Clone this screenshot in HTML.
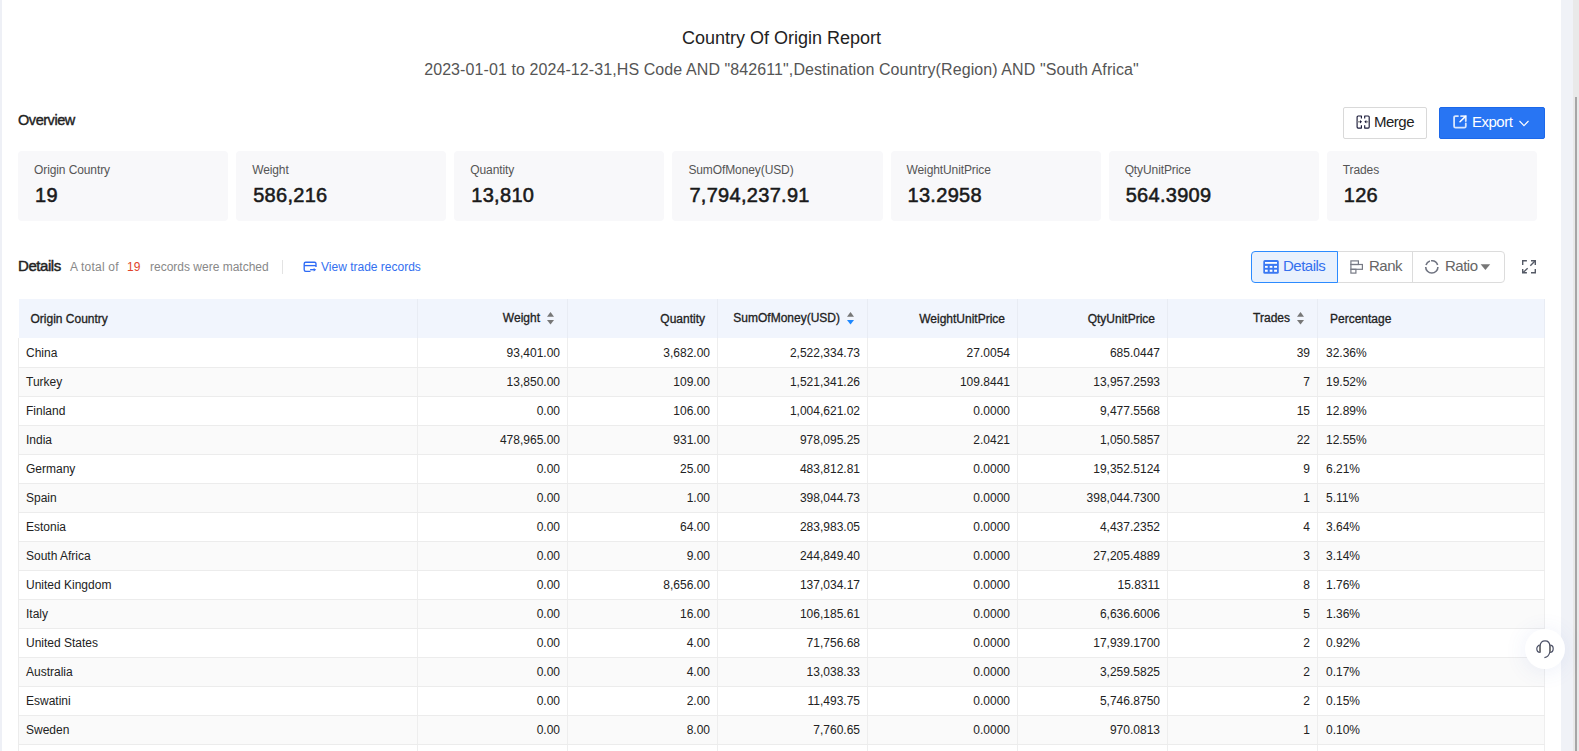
<!DOCTYPE html>
<html><head><meta charset="utf-8">
<style>
*{box-sizing:border-box;margin:0;padding:0}
html,body{width:1579px;height:751px;overflow:hidden;background:#fff;font-family:"Liberation Sans",sans-serif;color:#222}
.a{position:absolute}
.lstrip{position:absolute;left:0;top:0;width:2px;height:751px;background:#eef0f6}
.rstrip{position:absolute;left:1561px;top:0;width:12px;height:751px;background:#f0f2f7}
.track{position:absolute;left:1573px;top:0;width:6px;height:751px;background:#e9e9e9}
.thumb{position:absolute;left:1575px;top:97px;width:2px;height:654px;background:#a6a6a6}
.title{position:absolute;left:0;width:1563px;top:27px;text-align:center;font-size:18px;line-height:22px;color:#222}
.sub{position:absolute;left:0;width:1563px;top:60px;text-align:center;font-size:16px;letter-spacing:.09px;line-height:20px;color:#555}
.ov{position:absolute;left:18px;top:110.5px;font-size:14.5px;line-height:18px;letter-spacing:-0.45px;color:#222;-webkit-text-stroke:.4px #222}
.btn{position:absolute;top:107px;height:32px;border-radius:2px;font-size:15px;line-height:30px;letter-spacing:-0.5px}
.merge{left:1343px;width:84px;border:1px solid #d9d9d9;background:#fff;color:#222}
.export{left:1439px;width:106px;background:#2875f3;border:1px solid #1c68ea;color:#fff}
.cards{position:absolute;left:18px;top:151px;width:1535px;height:70px}
.card{float:left;width:210.14px;height:70px;margin-right:8px;background:#f8f8fa;border-radius:4px;padding:12px 0 0 16px}
.cl{font-size:12px;line-height:14px;color:#555;height:14px;letter-spacing:-.1px}
.cv{font-size:20px;line-height:20px;margin-top:8px;padding-left:1px;letter-spacing:.3px;color:#1a1a1a;-webkit-text-stroke:.55px #1a1a1a}
.det{position:absolute;left:18px;top:257px;font-size:15px;line-height:18px;letter-spacing:-0.45px;color:#222;-webkit-text-stroke:.45px #222}
.tot{position:absolute;top:260px;font-size:12px;line-height:14px;color:#888}
.red{color:#e0442b}
.sep{position:absolute;left:282px;top:260px;width:1px;height:14px;background:#e3e3e3}
.vtr{position:absolute;left:321px;top:260px;font-size:12px;line-height:14px;color:#3370f0}
.seg{position:absolute;top:251px;height:32px;border:1px solid #dcdcdc;font-size:15px;line-height:28px;letter-spacing:-0.5px;color:#666}
.table{position:absolute;left:18px;top:299px;width:1526px;border-collapse:collapse;table-layout:fixed}
.table th{height:39px;background:#f1f5fd;font-size:12px;font-weight:normal;color:#222;-webkit-text-stroke:.3px #222;border-right:1px solid #e8ecf4;padding:1px 12px 0 12px;white-space:nowrap}
.table th.s{padding-right:13px;padding-top:0;padding-bottom:1px}
.table td{height:29px;font-size:12px;color:#222;border-right:1px solid #eeeeee;border-bottom:1px solid #ececec;padding:1px 7px 0 8px;white-space:nowrap}
.table td.c0{border-left:1px solid #ececec;padding-left:7px}
.table th.r,.table td.r{text-align:right}
.table th.l,.table td.l,.table th.c0,.table td.c0{text-align:left}
tr.even td{background:#fafafa}
tr.odd td{background:#fff}
.sort{display:inline-block;margin-left:7px;vertical-align:-3.8px}
.cs{position:absolute;left:1525px;top:629px;width:40px;height:40px;border-radius:50%;background:#fff;box-shadow:0 2px 22px rgba(70,100,200,0.10)}
</style></head><body>
<div class="lstrip"></div>
<div class="rstrip"></div>
<div class="track"></div>
<div class="thumb"></div>

<div class="title">Country Of Origin Report</div>
<div class="sub">2023-01-01 to 2024-12-31,HS Code AND "842611",Destination Country(Region) AND "South Africa"</div>

<div class="ov">Overview</div>
<div class="btn merge"><span class="a" style="left:30px;top:-1.5px">Merge</span></div>
<svg class="a" style="left:1355px;top:114px" width="16" height="16" viewBox="0 0 16 16" fill="none" stroke="#1a1a38" stroke-width="1.15" stroke-linejoin="round"><path d="M6.4 4.6V2H3.1Q2.1 2 2.1 3V13.1Q2.1 14.1 3.1 14.1H6.4V11.2"/><path d="M9.7 4.6V2H13.2Q14.2 2 14.2 3V13.1Q14.2 14.1 13.2 14.1H9.7V11.2"/><path d="M2.6 7.8H5.2M13.7 7.8H11.1" stroke="#999" stroke-width="1.5"/><path d="M5 6.1L7 7.8L5 9.5Z M11.3 6.1L9.3 7.8L11.3 9.5Z" fill="#1a1a38" stroke="none"/></svg>
<div class="btn export"><span class="a" style="left:32px;top:-1px">Export</span></div>
<svg class="a" style="left:1451px;top:113px" width="17" height="17" viewBox="0 0 17 17" fill="none" stroke-width="1.8" stroke-linecap="round"><path d="M7 3.1H4.6Q3.1 3.1 3.1 4.6V13.2Q3.1 14.7 4.6 14.7H13.3Q14.8 14.7 14.8 13.2V10.4" stroke="rgba(255,255,255,.82)"/><path d="M10 3.1H14.8V8" stroke="rgba(255,255,255,.82)"/><path d="M9 8.8L14.5 3.4" stroke="#fff" stroke-width="1.5"/></svg>
<svg class="a" style="left:1518px;top:119px" width="12" height="9" viewBox="0 0 12 9" fill="none" stroke="#fff" stroke-width="1.1"><path d="M1.5 2L6 6.6L10.5 2"/></svg>

<div class="cards">
<div class="card"><div class="cl">Origin Country</div><div class="cv">19</div></div>
<div class="card"><div class="cl">Weight</div><div class="cv">586,216</div></div>
<div class="card"><div class="cl">Quantity</div><div class="cv">13,810</div></div>
<div class="card"><div class="cl">SumOfMoney(USD)</div><div class="cv">7,794,237.91</div></div>
<div class="card"><div class="cl">WeightUnitPrice</div><div class="cv">13.2958</div></div>
<div class="card"><div class="cl">QtyUnitPrice</div><div class="cv">564.3909</div></div>
<div class="card"><div class="cl">Trades</div><div class="cv">126</div></div>
</div>

<div class="det">Details</div>
<div class="tot" style="left:70px;letter-spacing:.2px">A total of</div>
<div class="tot red" style="left:127px">19</div>
<div class="tot" style="left:150px">records were matched</div>
<div class="sep"></div>
<svg class="a" style="left:302px;top:260px" width="16" height="16" viewBox="0 0 16 16" fill="none" stroke="#2f6bf5" stroke-width="1.35"><path d="M8.5 11.3H3.7Q2.2 11.3 2.2 9.8V3.7Q2.2 2.2 3.7 2.2H12.5Q14 2.2 14 3.7V6.9"/><path d="M2.2 5.6H14"/><path d="M8.1 9.7H12"/><path d="M11.7 7.9L14.2 9.7L11.7 11.5Z" fill="#2f6bf5" stroke="none"/></svg>
<div class="vtr">View trade records</div>

<div class="seg" style="left:1251px;width:87px;border-color:#2c8bff;background:#e9f1fd;color:#3470ee;border-radius:4px 0 0 4px;z-index:2"><span class="a" style="left:31px;top:0">Details</span></div>
<svg class="a" style="left:1262px;top:259px;z-index:3" width="18" height="18" viewBox="0 0 18 18"><rect x="1.3" y="1.1" width="15.5" height="13.7" rx="1.6" fill="#3a78f2"/><rect x="3" y="3" width="12" height="1.8" fill="#fff"/><rect x="3" y="6.9" width="2.7" height="1.9" fill="#fff"/><rect x="3" y="10.7" width="2.7" height="2.1" fill="#fff"/><rect x="7.7" y="6.9" width="2.7" height="1.9" fill="#fff"/><rect x="7.7" y="10.7" width="2.7" height="2.1" fill="#fff"/><rect x="12.1" y="6.9" width="2.9" height="1.9" fill="#fff"/><rect x="12.1" y="10.7" width="2.9" height="2.1" fill="#fff"/></svg>
<div class="seg" style="left:1337px;width:76px;border-left:none"><span class="a" style="left:32px;top:0">Rank</span></div>
<svg class="a" style="left:1349px;top:259px" width="16" height="16" viewBox="0 0 16 16" fill="none" stroke="#777a85" stroke-width="1.2"><rect x="1.9" y="1.9" width="7.5" height="3.6"/><rect x="1.9" y="5.5" width="11.5" height="4.8"/><rect x="1.9" y="10.3" width="5" height="3.8"/></svg>
<div class="seg" style="left:1412px;width:93px;border-radius:0 4px 4px 0"><span class="a" style="left:32px;top:0">Ratio</span></div>
<svg class="a" style="left:1424px;top:259px" width="16" height="16" viewBox="0 0 16 16" fill="none" stroke="#6f7380" stroke-width="1.6"><path d="M5.91 2.0A6.1 6.1 0 0 0 2.0 5.91"/><path d="M13.61 5.96A6.1 6.1 0 0 0 7.06 1.75"/><path d="M13.9 7.91A6.1 6.1 0 0 1 1.7 7.91"/></svg>
<svg class="a" style="left:1480px;top:264px" width="11" height="7" viewBox="0 0 11 7"><path d="M0.6 0.3H10.2L5.4 5.9Z" fill="#777"/></svg>
<svg class="a" style="left:1520px;top:258px" width="18" height="18" viewBox="0 0 18 18" fill="none" stroke="#555a66" stroke-width="1.4"><path d="M2.7 6.9V2.8H6.9"/><path d="M11 2.8H15.3V6.9"/><path d="M15 3.1L10.3 7.8"/><path d="M2.7 11V14.8H6.9"/><path d="M3 14.5L7.7 10.3"/><path d="M11 14.8H15.3V11"/></svg>

<table class="table">
<colgroup><col style="width:399px"><col style="width:150px"><col style="width:150px"><col style="width:150px"><col style="width:150px"><col style="width:150px"><col style="width:150px"><col style="width:227px"></colgroup>
<tr class="hd"><th class="c0">Origin Country</th><th class="r s">Weight<svg class="sort" width="7" height="13" viewBox="0 0 7 13"><path d="M0 4.7L3.5 0L7 4.7Z" fill="#777"/><path d="M0 7.9H7L3.5 12.6Z" fill="#777"/></svg></th><th class="r">Quantity</th><th class="r s">SumOfMoney(USD)<svg class="sort" width="7" height="13" viewBox="0 0 7 13"><path d="M0 4.7L3.5 0L7 4.7Z" fill="#777"/><path d="M0 7.9H7L3.5 12.6Z" fill="#1e88ff"/></svg></th><th class="r">WeightUnitPrice</th><th class="r">QtyUnitPrice</th><th class="r s">Trades<svg class="sort" width="7" height="13" viewBox="0 0 7 13"><path d="M0 4.7L3.5 0L7 4.7Z" fill="#777"/><path d="M0 7.9H7L3.5 12.6Z" fill="#777"/></svg></th><th class="l">Percentage</th></tr>
<tr class="odd"><td class="c0">China</td><td class="r">93,401.00</td><td class="r">3,682.00</td><td class="r">2,522,334.73</td><td class="r">27.0054</td><td class="r">685.0447</td><td class="r">39</td><td class="l">32.36%</td></tr>
<tr class="even"><td class="c0">Turkey</td><td class="r">13,850.00</td><td class="r">109.00</td><td class="r">1,521,341.26</td><td class="r">109.8441</td><td class="r">13,957.2593</td><td class="r">7</td><td class="l">19.52%</td></tr>
<tr class="odd"><td class="c0">Finland</td><td class="r">0.00</td><td class="r">106.00</td><td class="r">1,004,621.02</td><td class="r">0.0000</td><td class="r">9,477.5568</td><td class="r">15</td><td class="l">12.89%</td></tr>
<tr class="even"><td class="c0">India</td><td class="r">478,965.00</td><td class="r">931.00</td><td class="r">978,095.25</td><td class="r">2.0421</td><td class="r">1,050.5857</td><td class="r">22</td><td class="l">12.55%</td></tr>
<tr class="odd"><td class="c0">Germany</td><td class="r">0.00</td><td class="r">25.00</td><td class="r">483,812.81</td><td class="r">0.0000</td><td class="r">19,352.5124</td><td class="r">9</td><td class="l">6.21%</td></tr>
<tr class="even"><td class="c0">Spain</td><td class="r">0.00</td><td class="r">1.00</td><td class="r">398,044.73</td><td class="r">0.0000</td><td class="r">398,044.7300</td><td class="r">1</td><td class="l">5.11%</td></tr>
<tr class="odd"><td class="c0">Estonia</td><td class="r">0.00</td><td class="r">64.00</td><td class="r">283,983.05</td><td class="r">0.0000</td><td class="r">4,437.2352</td><td class="r">4</td><td class="l">3.64%</td></tr>
<tr class="even"><td class="c0">South Africa</td><td class="r">0.00</td><td class="r">9.00</td><td class="r">244,849.40</td><td class="r">0.0000</td><td class="r">27,205.4889</td><td class="r">3</td><td class="l">3.14%</td></tr>
<tr class="odd"><td class="c0">United Kingdom</td><td class="r">0.00</td><td class="r">8,656.00</td><td class="r">137,034.17</td><td class="r">0.0000</td><td class="r">15.8311</td><td class="r">8</td><td class="l">1.76%</td></tr>
<tr class="even"><td class="c0">Italy</td><td class="r">0.00</td><td class="r">16.00</td><td class="r">106,185.61</td><td class="r">0.0000</td><td class="r">6,636.6006</td><td class="r">5</td><td class="l">1.36%</td></tr>
<tr class="odd"><td class="c0">United States</td><td class="r">0.00</td><td class="r">4.00</td><td class="r">71,756.68</td><td class="r">0.0000</td><td class="r">17,939.1700</td><td class="r">2</td><td class="l">0.92%</td></tr>
<tr class="even"><td class="c0">Australia</td><td class="r">0.00</td><td class="r">4.00</td><td class="r">13,038.33</td><td class="r">0.0000</td><td class="r">3,259.5825</td><td class="r">2</td><td class="l">0.17%</td></tr>
<tr class="odd"><td class="c0">Eswatini</td><td class="r">0.00</td><td class="r">2.00</td><td class="r">11,493.75</td><td class="r">0.0000</td><td class="r">5,746.8750</td><td class="r">2</td><td class="l">0.15%</td></tr>
<tr class="even"><td class="c0">Sweden</td><td class="r">0.00</td><td class="r">8.00</td><td class="r">7,760.65</td><td class="r">0.0000</td><td class="r">970.0813</td><td class="r">1</td><td class="l">0.10%</td></tr>
<tr class="odd"><td class="c0"></td><td class="r"></td><td class="r"></td><td class="r"></td><td class="r"></td><td class="r"></td><td class="r"></td><td class="l"></td></tr>
</table>

<div class="cs"></div>
<svg class="a" style="left:1533px;top:637px" width="24" height="24" viewBox="0 0 24 24" fill="none" stroke="#4a4f66" stroke-width="1.2"><path d="M7.2 15.4V9C7.2 5.5 9.2 3.8 12 3.8C14.8 3.8 16.8 5.5 16.8 9V15.4"/><path d="M7.2 8.2C5 8.2 3.8 10 3.8 11.8C3.8 13.6 5 15.4 7.2 15.4"/><path d="M16.8 8.2C19 8.2 20.2 10 20.2 11.8C20.2 13.6 19 15.4 16.8 15.4"/><path d="M16.8 15C16.2 18.5 14.2 20.3 11.4 20.6"/><path d="M6.9 8.4V15.2M17.1 8.4V15.2" stroke="#777" stroke-width="1.6"/></svg>
</body></html>
